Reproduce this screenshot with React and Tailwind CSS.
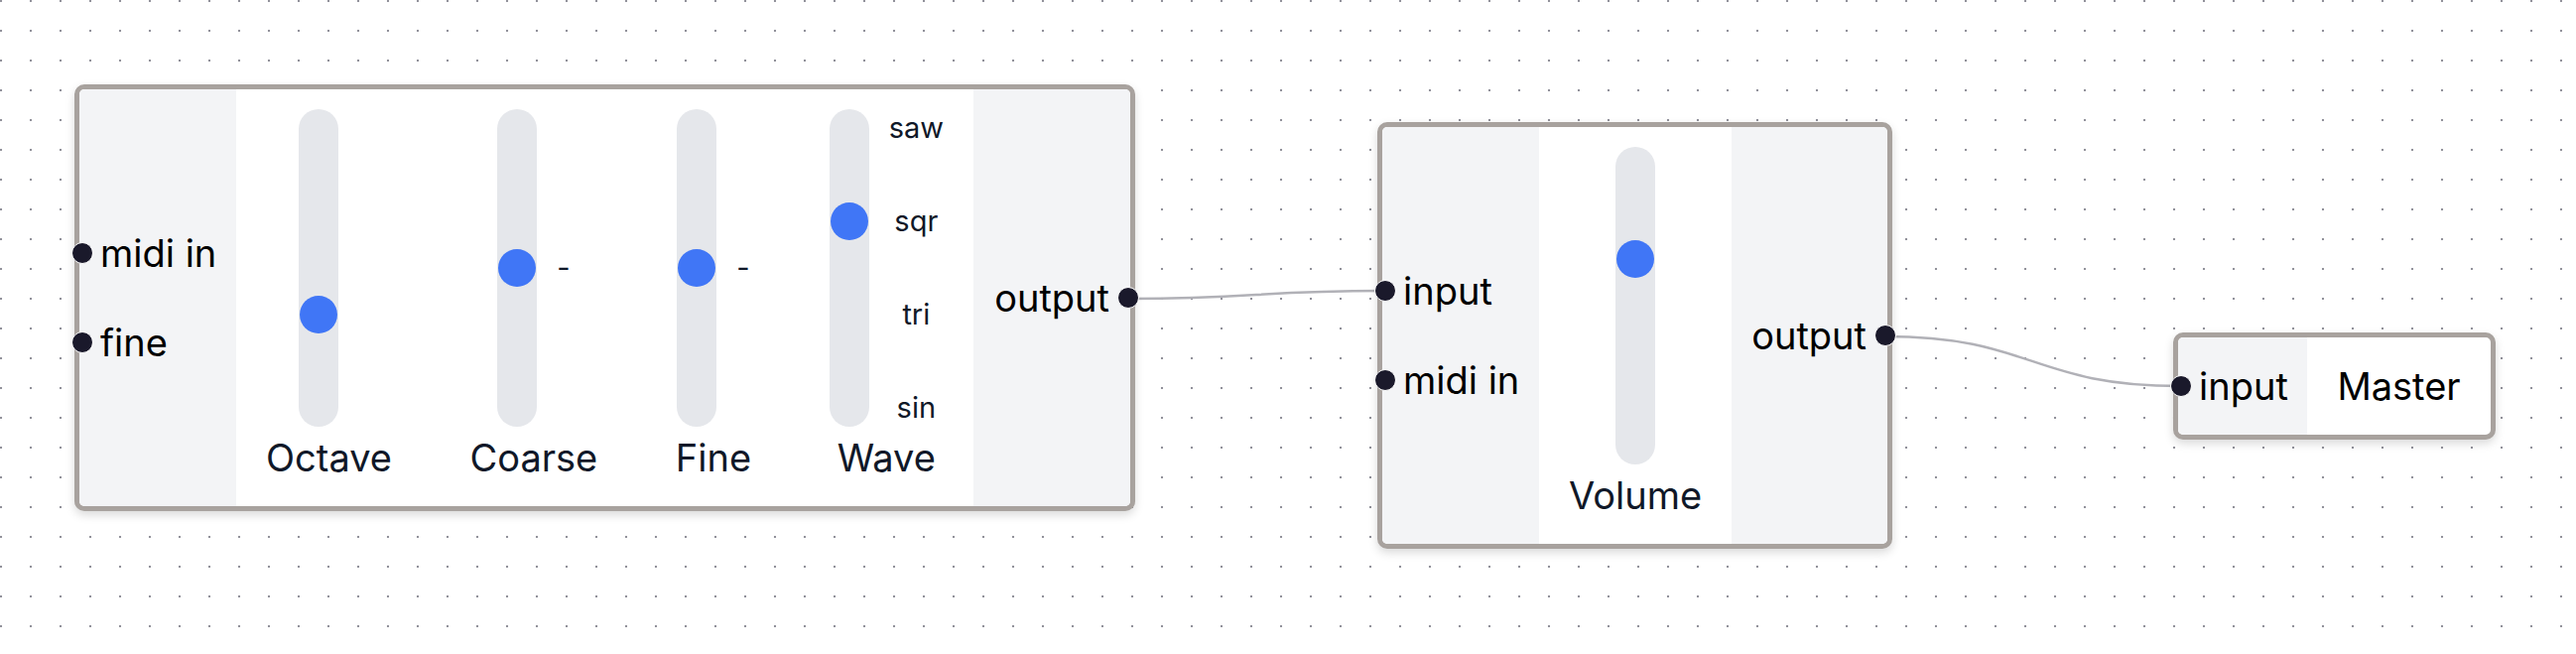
import React from 'react';

const TRAVEL = 282;

function Handle({ side }) {
    const pos = side === 'left' ? 'left-[-29px]' : 'right-[-30px]';
    return <span className={`absolute top-1/2 -translate-y-1/2 ${pos} h-[22px] w-[22px] rounded-full border-[1.5px] border-white bg-[#1a192b]`} />;
}

function Ports({ side, ports, width }) {
    const align = side === 'left' ? 'items-start rounded-l-[5px]' : 'items-end rounded-r-[5px]';
    return (
        <div className={`flex flex-col justify-center gap-[33px] bg-[#f3f4f6] px-[21px] ${align} ${width}`}>
            {ports.map((p) => (
                <div key={p} className="relative whitespace-nowrap text-[38px] leading-[57px] text-black">
                    {p}
                    <Handle side={side} />
                </div>
            ))}
        </div>
    );
}

function Slider({ label, value, text, ticks }) {
    const top = Math.round(TRAVEL * (1 - value));
    return (
        <div className="flex flex-col items-center">
            <div className="flex h-[320px]">
                <div className="relative h-[320px] w-[40px] rounded-full bg-[#e5e7eb]">
                    <div className="absolute left-[1px] h-[38px] w-[38px] rounded-full bg-[#4076f6]" style={{ top }} />
                </div>
                {ticks && (
                    <div className="ml-[20px] flex h-[320px] flex-col items-center justify-between text-[29px] leading-[38px] text-[#101828]">
                        {ticks.map((t) => <span key={t}>{t}</span>)}
                    </div>
                )}
                {text !== undefined && (
                    <div className="ml-[20px] text-[29px] leading-[38px] text-[#101828]" style={{ paddingTop: top }}>{text}</div>
                )}
            </div>
            <div className="mt-[8px] text-[38px] leading-[46px] text-[#101828]">{label}</div>
        </div>
    );
}

function Node({ className, children }) {
    return (
        <div className={`absolute flex rounded-[10px] border-[5px] border-[#a8a29e] bg-white shadow-[0_4px_10px_rgba(0,0,0,0.15)] ${className}`}>
            {children}
        </div>
    );
}

export default function App() {
    return (
        <div className="relative h-[659px] w-[2596px] overflow-hidden bg-white bg-[radial-gradient(circle,#91919a_1px,transparent_1.6px)] bg-[size:30px_30px] bg-[position:-14px_-14px] font-[Inter,sans-serif]">
            <svg className="absolute inset-0 h-full w-full" fill="none" stroke="#b1b1b7" strokeWidth="2.5">
                <path d="M1137 301 C1266 301 1266 293 1395 293" />
                <path d="M1900 339 C2048 339 2048 389 2197 389" />
            </svg>

            <Node className="left-[75px] top-[85px] h-[430px]">
                <Ports side="left" ports={['midi in', 'fine']} width="w-[158px]" />
                <div className="flex w-[743px] justify-between px-[30px] pt-[20px]">
                    <Slider label="Octave" value={1 / 3} text="" />
                    <Slider label="Coarse" value={0.5} text="-" />
                    <Slider label="Fine" value={0.5} text="-" />
                    <Slider label="Wave" value={2 / 3} ticks={['saw', 'sqr', 'tri', 'sin']} />
                </div>
                <Ports side="right" ports={['output']} width="w-[158px]" />
            </Node>

            <Node className="left-[1388px] top-[123px] h-[430px]">
                <Ports side="left" ports={['input', 'midi in']} width="w-[158px]" />
                <div className="flex w-[194px] justify-center pt-[20px]">
                    <Slider label="Volume" value={2 / 3} />
                </div>
                <Ports side="right" ports={['output']} width="w-[157px]" />
            </Node>

            <Node className="left-[2190px] top-[335px] h-[108px]">
                <Ports side="left" ports={['input']} width="w-[130px]" />
                <div className="flex w-[185px] items-center justify-center rounded-r-[5px] text-[38px] text-black">Master</div>
            </Node>
        </div>
    );
}
